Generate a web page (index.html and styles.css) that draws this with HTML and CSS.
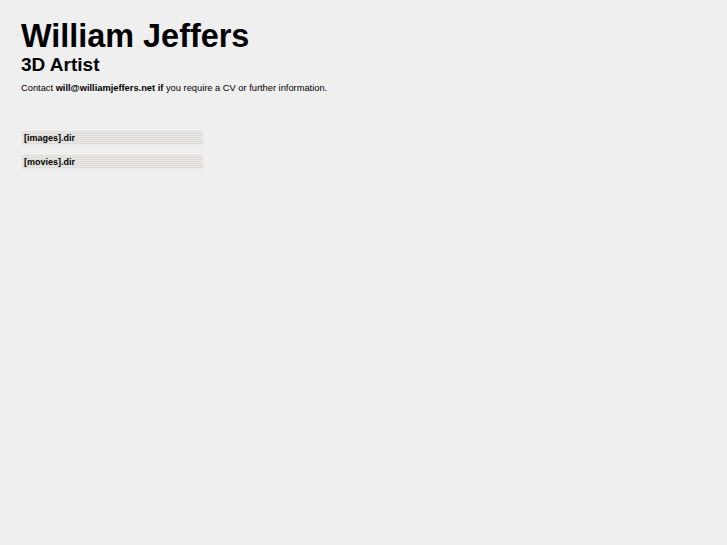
FILE: index.html
```html
<!DOCTYPE html>
<html lang="en">
<head>
  <meta charset="UTF-8" />
  <title>William Jeffers - 3D Artist</title>
  <link rel="stylesheet" href="styles.css">
</head>
<body>
  <div class="page">
    <h1>William Jeffers</h1>
    <h2>3D Artist</h2>
    <p class="contact">Contact <b>will@williamjeffers.net if</b> you require a CV or further information.</p>
    <ul class="dirs">
      <li><a href="#">[images].dir</a></li>
      <li><a href="#">[movies].dir</a></li>
    </ul>
  </div>
</body>
</html>
```

FILE: styles.css
```css
body {
  margin: 0;
  background: #efefef;
  color: #000;
  font-family: "Liberation Sans", Arial, sans-serif;
}
.page {
  padding: 17px 21px;
}
h1 {
  margin: 0;
  font-size: 32.4px;
  line-height: 38px;
  font-weight: bold;
}
h2 {
  margin: 0;
  font-size: 19px;
  line-height: 20px;
  font-weight: bold;
}
.contact {
  margin: 7px 0 0;
  font-size: 9.3px;
  line-height: 12px;
}
.dirs {
  list-style: none;
  margin: 37px 0 0 1px;
  padding: 0;
  display: flex;
  flex-direction: column;
  gap: 10px;
  width: 181px;
}
.dirs a {
  display: block;
  height: 13px;
  padding: 1px 0 0 2px;
  font-size: 9px;
  line-height: 12px;
  font-weight: bold;
  color: #000;
  text-decoration: none;
  /* striped bar */
  background: repeating-linear-gradient(to bottom, #dfdcd8 0, #dfdcd8 1px, #ebe9e6 1px, #ebe9e6 2px);
}
```
